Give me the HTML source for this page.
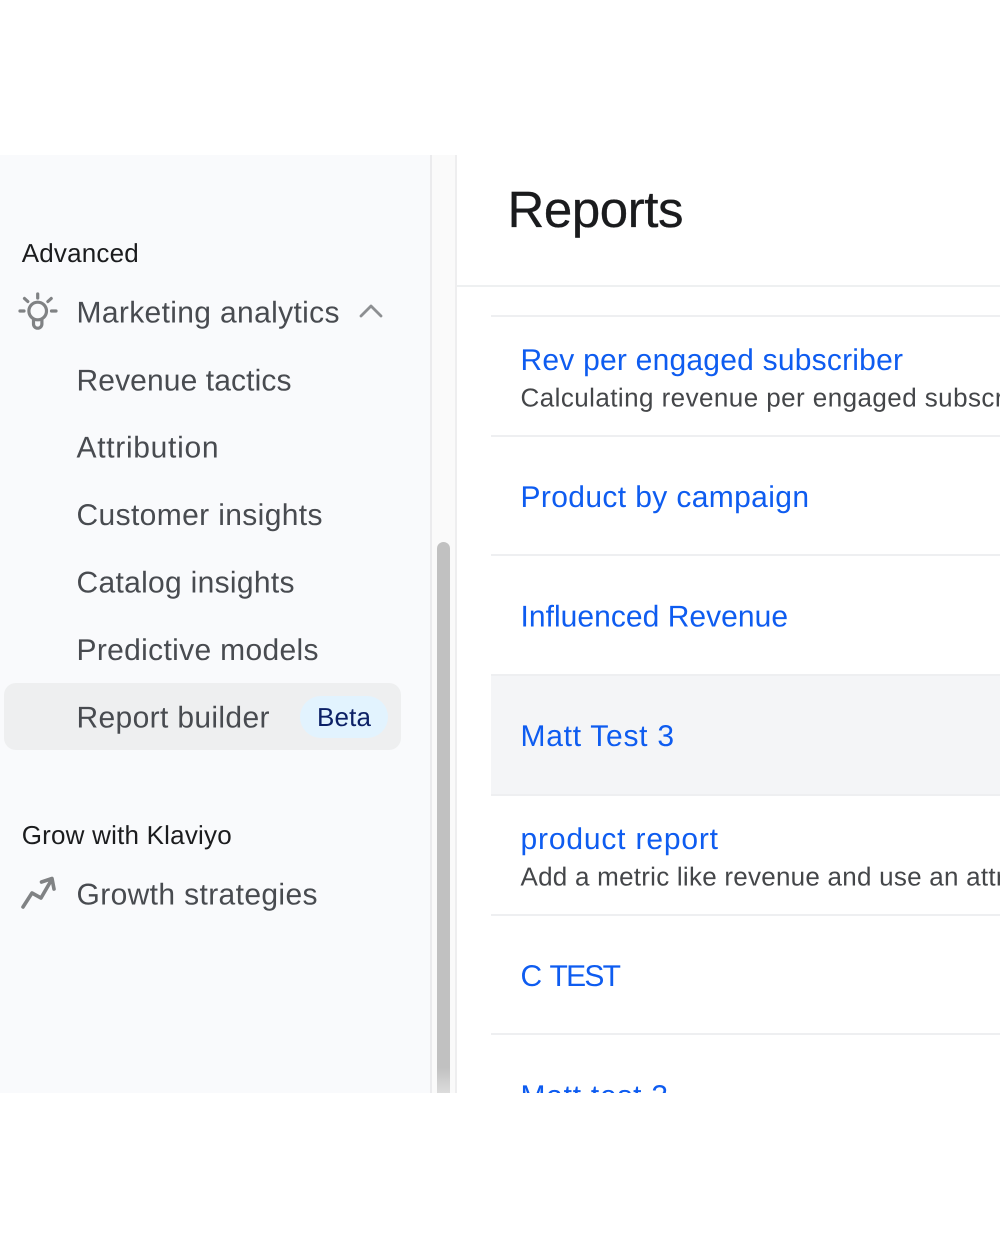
<!DOCTYPE html>
<html lang="en">
<head>
<meta charset="utf-8">
<title>Reports</title>
<style>
html,body{margin:0;padding:0;width:1000px;height:1250px;background:#fff;overflow:hidden}
svg{display:block;position:absolute;left:0;top:0}
text{font-family:"Liberation Sans",sans-serif;text-rendering:geometricPrecision}
.nav{font-size:30px;fill:#484b50}
.sec{font-size:26px;fill:#1b1c1e}
.lnk{font-size:30px;fill:#0e5cf0}
.dsc{font-size:26px;fill:#444649}
</style>
</head>
<body>
<svg width="1000" height="1250" viewBox="0 0 1000 1250" xmlns="http://www.w3.org/2000/svg">
<defs>
<clipPath id="c"><rect x="0" y="155" width="1000" height="938"/></clipPath>
<linearGradient id="f" x1="0" y1="0" x2="0" y2="1">
<stop offset="0" stop-color="#c1c1c1"/><stop offset="1" stop-color="#dcdcdc"/>
</linearGradient>
</defs>
<g clip-path="url(#c)">
<rect x="0" y="155" width="431" height="938" fill="#f9fafc"/>
<rect x="431" y="155" width="25" height="938" fill="#fafafa"/>
<rect x="430" y="155" width="2" height="938" fill="#ebebed"/>
<rect x="455" y="155" width="2" height="938" fill="#eeeeef"/>
<rect x="437" y="542" width="13" height="560" rx="6.5" fill="#c1c1c1"/>
<rect x="437" y="1068" width="13" height="25" fill="url(#f)"/>

<rect x="4" y="683" width="397" height="67" rx="12" fill="#eeeff0"/>
<rect x="300" y="696" width="88" height="42" rx="21" fill="#e2f3fe"/>

<text class="sec" x="21.7" y="262" textLength="117">Advanced</text>
<text class="nav" x="76.500" y="322.500" textLength="263">Marketing analytics</text>
<text class="nav" x="76.500" y="390.300" textLength="215">Revenue tactics</text>
<text class="nav" x="76.500" y="457.500" textLength="142">Attribution</text>
<text class="nav" x="76.500" y="525" textLength="246">Customer insights</text>
<text class="nav" x="76.500" y="592.500" textLength="218">Catalog insights</text>
<text class="nav" x="76.500" y="660" textLength="242">Predictive models</text>
<text class="nav" x="76.500" y="727.500" textLength="193">Report builder</text>
<text x="317" y="726" font-size="26" fill="#0c2066" textLength="54">Beta</text>
<text class="sec" x="21.7" y="844" textLength="210">Grow with Klaviyo</text>
<text class="nav" x="76.500" y="904.500" textLength="241">Growth strategies</text>

<!-- bulb icon -->
<g fill="none" stroke="#808284" stroke-width="3.2" stroke-linecap="round" stroke-linejoin="round">
<circle cx="37.700" cy="311" r="8.800"/>
<path d="M33.500 320v4a4.200 4.200 0 0 0 8.400 0v-4"/>
<path d="M37.700 294v4M24.500 298.500l3.300 3M51.200 298.500l-3.300 3M20 311h4M51.500 311h4.500"/>
<path d="M361 316l10-10 10 10" stroke-width="2.800" stroke="#8d8f92"/>
<path d="M23 907l9-14 9 5 11-19M41.500 882l10.500-3.500 2 10.500" stroke-width="3.600"/>
</g>

<!-- main -->
<rect x="457" y="155" width="543" height="938" fill="#fff"/>
<text x="507.500" y="227" font-size="51" fill="#1a1b1d" textLength="176" style="stroke:#1a1b1d;stroke-width:.3px">Reports</text>
<rect x="457" y="285" width="543" height="2" fill="#eef0f1"/>

<rect x="491" y="675" width="509" height="121" fill="#f4f5f7"/>
<g fill="#eeeff1">
<rect x="491" y="315" width="509" height="2"/>
<rect x="491" y="435" width="509" height="2"/>
<rect x="491" y="554" width="509" height="2"/>
<rect x="491" y="674" width="509" height="2"/>
<rect x="491" y="794" width="509" height="2"/>
<rect x="491" y="914" width="509" height="2"/>
<rect x="491" y="1033" width="509" height="2"/>
</g>

<text class="lnk" x="520.500" y="370" textLength="382.500">Rev per engaged subscriber</text>
<text class="dsc" x="520.500" y="406.300" textLength="483">Calculating revenue per engaged subscr</text>
<text class="lnk" x="520.500" y="507" textLength="288.500">Product by campaign</text>
<text class="lnk" x="520.500" y="626.500" textLength="267.500">Influenced Revenue</text>
<text class="lnk" x="520.500" y="746" textLength="153.500">Matt Test 3</text>
<text class="lnk" x="520.500" y="849" textLength="197.500">product report</text>
<text class="dsc" x="520.500" y="885.300" textLength="484">Add a metric like revenue and use an attr</text>
<text class="lnk" x="520.500" y="986" textLength="100.500" style="word-spacing:3px">C TEST</text>
<text class="lnk" x="520.500" y="1106" textLength="147.500">Matt test 3</text>
</g>
</svg>
</body>
</html>
